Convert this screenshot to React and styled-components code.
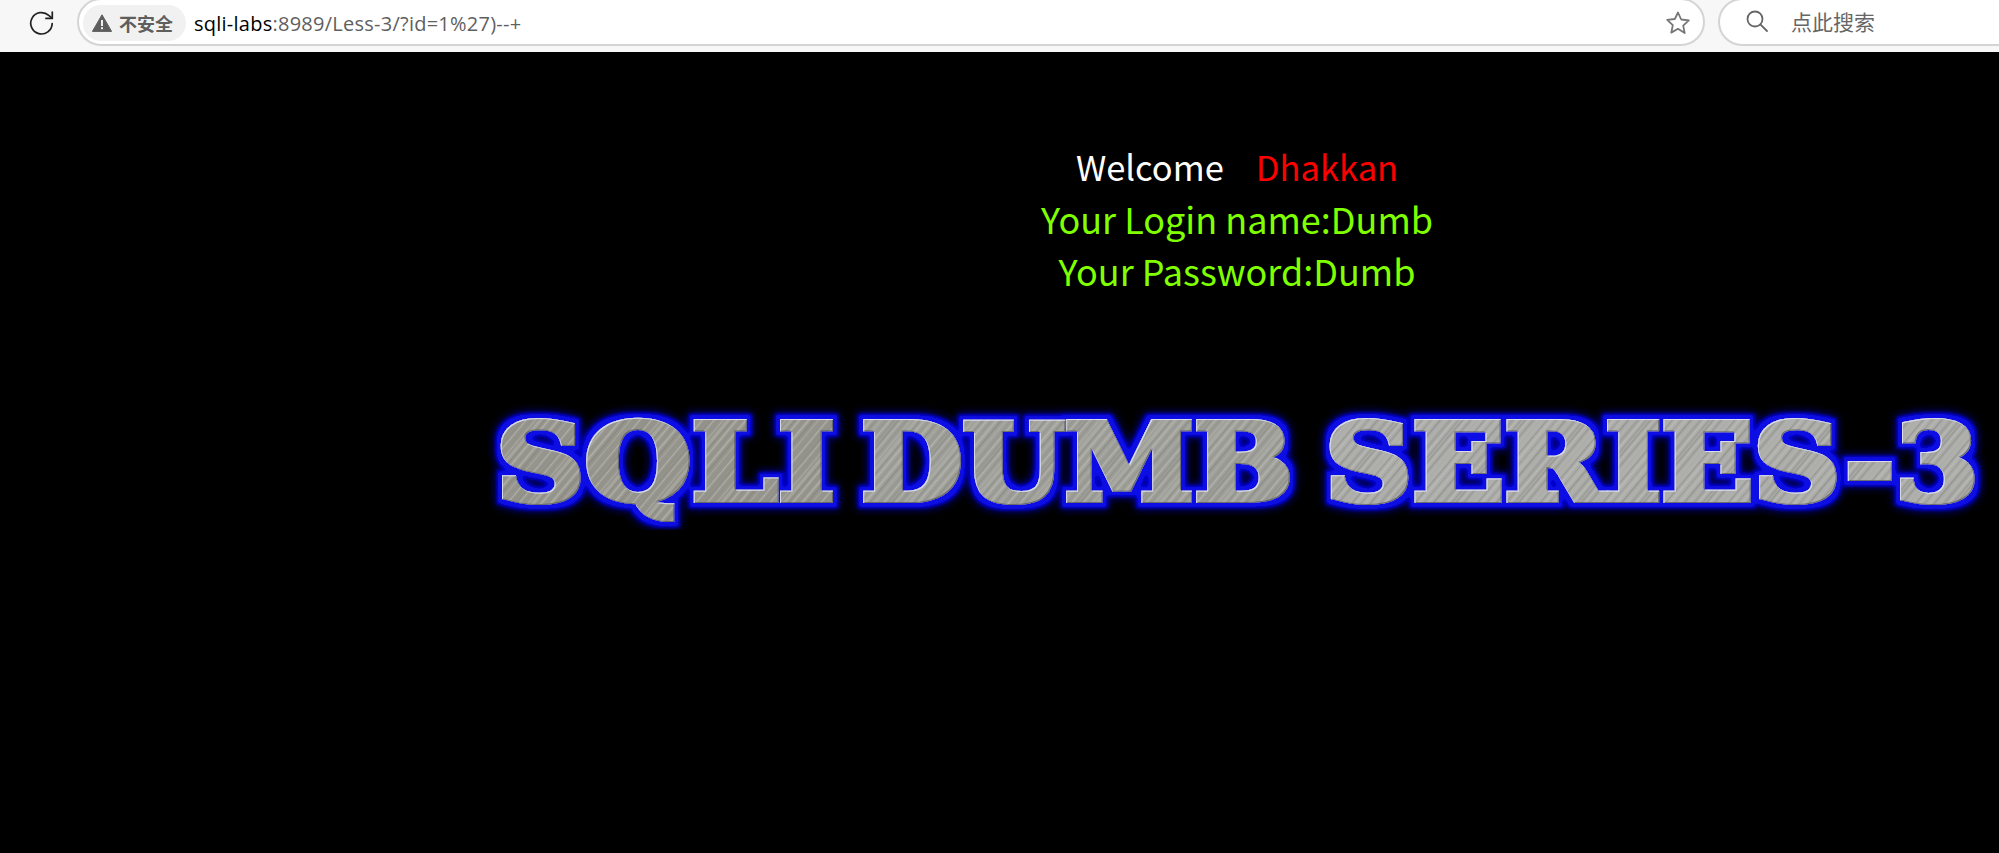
import React from "react";
import styled, { createGlobalStyle } from "styled-components";

const Global = createGlobalStyle`
  html, body { margin: 0; padding: 0; background: #000; overflow: hidden; }
  #root { width: 1999px; height: 853px; }
`;

const Page = styled.div`
  width: 1999px;
  height: 853px;
  display: flex;
  flex-direction: column;
  background: #000;
  overflow: hidden;
`;

const Toolbar = styled.header`
  height: 52px;
  flex: none;
  box-sizing: border-box;
  display: flex;
  align-items: flex-end;
  padding: 0 0 6px 0;
  background: #f7f7f7;
  overflow: hidden;
`;

const ReloadButton = styled.div`
  width: 77px;
  height: 46px;
  flex: none;
  display: flex;
  align-items: center;
  justify-content: center;
  padding-left: 6px;
  box-sizing: border-box;
`;

const Pill = styled.div`
  height: 48px;
  box-sizing: border-box;
  background: #fff;
  border: 2px solid #d4d4d4;
  border-radius: 24px;
  display: flex;
  align-items: center;
  font-family: "Open Sans", "Noto Sans CJK SC", sans-serif;
`;

const AddressBar = styled(Pill)`
  width: 1628px;
  flex: none;
  padding: 2px 12px 0 4px;
`;

const SearchBar = styled(Pill)`
  width: 320px;
  flex: none;
  margin-left: 13px;
  padding: 0 0 2px 25px;
  border-right: none;
  border-radius: 24px 0 0 24px;
`;

const SecurityChip = styled.div`
  height: 36px;
  padding: 0 13px 0 9px;
  display: flex;
  align-items: center;
  gap: 7px;
  border-radius: 18px;
  background: #f1f1f1;
  color: #5e5e5e;
  font: 700 18px "Noto Sans CJK SC", sans-serif;
`;

const Url = styled.div`
  flex: 1;
  margin-left: 8px;
  font-size: 20px;
  letter-spacing: 0.25px;
  color: #5f5f5f;
  white-space: nowrap;
`;

const Host = styled.span`
  color: #000;
`;

const SearchText = styled.div`
  margin-left: 22px;
  font: 400 21px "Noto Sans CJK SC", sans-serif;
  color: #666;
`;

const Content = styled.main`
  flex: 1;
  display: flex;
  flex-direction: column;
  padding-top: 88px;
`;

const Greeting = styled.div`
  padding-left: 475px;
  text-align: center;
  font: 400 36px/52px "Noto Sans CJK SC", "Noto Sans", sans-serif;
  color: #7fff00;
`;

const WelcomeLine = styled.div`
  font-size: 34.5px;
`;

const Welcome = styled.span`
  color: #fff;
`;

const Name = styled.span`
  color: #f00;
  margin-left: 32px;
`;

const Logo = styled.svg`
  display: block;
  margin: 99px 0 0 480px;
  flex: none;
`;

const LogoWord = styled.text`
  font-family: "DejaVu Serif", serif;
  font-weight: 700;
  font-size: 107px;
  stroke-miterlimit: 6;
  stroke-linejoin: miter;
`;

const words = [
  { t: "SQLI", x: 16, w: 339, base: "#96968f" },
  { t: "DUMB", x: 381, w: 432, base: "#a0a09a" },
  { t: "SERIES-3", x: 845, w: 654, base: "#acacaa" },
];

const streaks = [
  [0, 1.5, "#85857f"], [3, 1, "#c2c2bc"], [6, 2, "#8e8e88"], [10, 1, "#b8b8b0"],
  [13, 3, "#b0b0aa"], [17, 1, "#80807a"], [20, 1.5, "#c4c4be"], [24, 1, "#8a8a84"],
  [27, 2, "#bcbcb4"], [31, 1.5, "#7e7e78"], [35, 1, "#b4b4ae"], [38, 2.5, "#92928c"],
  [42, 1, "#c8c8c0"], [45, 1.5, "#888882"],
];

function ReloadIcon() {
  return (
    <svg width="30" height="30" viewBox="0 0 28 28" fill="none" stroke="#222" strokeWidth="1.6" strokeLinecap="round" strokeLinejoin="round">
      <path d="M23.5 14.5a10 10 0 1 1-3.2-7.6l3 2.6" />
      <path d="M23.6 3.8v5.9h-5.9" />
    </svg>
  );
}

function WarnIcon() {
  return (
    <svg width="20" height="18" viewBox="0 0 20 18">
      <path d="M10 0.8 19.6 17.4H.4z" fill="#5e5e5e" stroke="#5e5e5e" strokeLinejoin="round" />
      <rect x="9" y="6" width="2" height="6" fill="#f1f1f1" />
      <rect x="9" y="13.2" width="2" height="2" fill="#f1f1f1" />
    </svg>
  );
}

function StarIcon() {
  return (
    <svg width="26" height="26" viewBox="0 0 26 26" fill="none" stroke="#767676" strokeWidth="1.8" strokeLinejoin="round">
      <path d="M13 2.5l3.2 7 7.6.9-5.6 5.2 1.5 7.5L13 18.8l-6.7 3.8 1.5-7.5-5.6-5.2 7.6-.9z" />
    </svg>
  );
}

function SearchIcon() {
  return (
    <svg width="24" height="24" viewBox="0 0 24 24" fill="none" stroke="#666" strokeWidth="1.8" strokeLinecap="round">
      <circle cx="10" cy="10" r="7.5" />
      <path d="M15.6 15.6 22 22" />
    </svg>
  );
}

const StarSlot = styled.div`
  flex: none;
  display: flex;
`;

function LogoArt() {
  return (
    <Logo width="1519" height="135" viewBox="0 0 1519 135">
      <defs>
        {words.map((w, i) => (
          <pattern key={w.t} id={`brush${i}`} width="48" height="48" patternUnits="userSpaceOnUse" patternTransform="rotate(-50)">
            <rect width="48" height="48" fill={w.base} />
            {streaks.map(([y, h, c]) => (
              <rect key={y} y={y} width="48" height={h} fill={c} opacity="0.55" />
            ))}
          </pattern>
        ))}
        <filter id="glow" x="-5%" y="-30%" width="110%" height="160%">
          <feMorphology in="SourceAlpha" operator="dilate" radius="5" result="fat" />
          <feGaussianBlur in="fat" stdDeviation="1.8" result="soft" />
          <feFlood floodColor="#0808e6" />
          <feComposite in2="soft" operator="in" result="blue" />
          <feMorphology in="SourceAlpha" operator="dilate" radius="6" result="fatter" />
          <feGaussianBlur in="fatter" stdDeviation="4" result="wide" />
          <feFlood floodColor="#06069a" />
          <feComposite in2="wide" operator="in" result="halo" />
          <feOffset in="SourceAlpha" dx="1" dy="1" result="down" />
          <feFlood floodColor="#e6e8fa" floodOpacity="0.8" />
          <feComposite in2="SourceAlpha" operator="in" />
          <feComposite in2="down" operator="out" result="light" />
          <feOffset in="SourceAlpha" dx="-1" dy="-1" result="up" />
          <feFlood floodColor="#55555c" floodOpacity="0.8" />
          <feComposite in2="SourceAlpha" operator="in" />
          <feComposite in2="up" operator="out" result="dark" />
          <feMerge>
            <feMergeNode in="halo" />
            <feMergeNode in="blue" />
            <feMergeNode in="SourceGraphic" />
            <feMergeNode in="dark" />
            <feMergeNode in="light" />
          </feMerge>
        </filter>
      </defs>
      <g filter="url(#glow)">
        {words.map((w, i) => (
          <LogoWord
            key={w.t}
            x={w.x}
            y="105"
            textLength={w.w}
            lengthAdjust="spacingAndGlyphs"
            fill={`url(#brush${i})`}
            stroke={`url(#brush${i})`}
            strokeWidth="6"
          >
            {w.t}
          </LogoWord>
        ))}
      </g>
    </Logo>
  );
}

export default function App() {
  return (
    <Page>
      <Global />
      <Toolbar>
        <ReloadButton>
          <ReloadIcon />
        </ReloadButton>
        <AddressBar>
          <SecurityChip>
            <WarnIcon />
            不安全
          </SecurityChip>
          <Url>
            <Host>sqli-labs</Host>:8989/Less-3/?id=1%27)--+
          </Url>
          <StarSlot>
            <StarIcon />
          </StarSlot>
        </AddressBar>
        <SearchBar>
          <SearchIcon />
          <SearchText>点此搜索</SearchText>
        </SearchBar>
      </Toolbar>
      <Content>
        <Greeting>
          <WelcomeLine>
            <Welcome>Welcome</Welcome>
            <Name>Dhakkan</Name>
          </WelcomeLine>
          <div>Your Login name:Dumb</div>
          <div>Your Password:Dumb</div>
        </Greeting>
        <LogoArt />
      </Content>
    </Page>
  );
}
